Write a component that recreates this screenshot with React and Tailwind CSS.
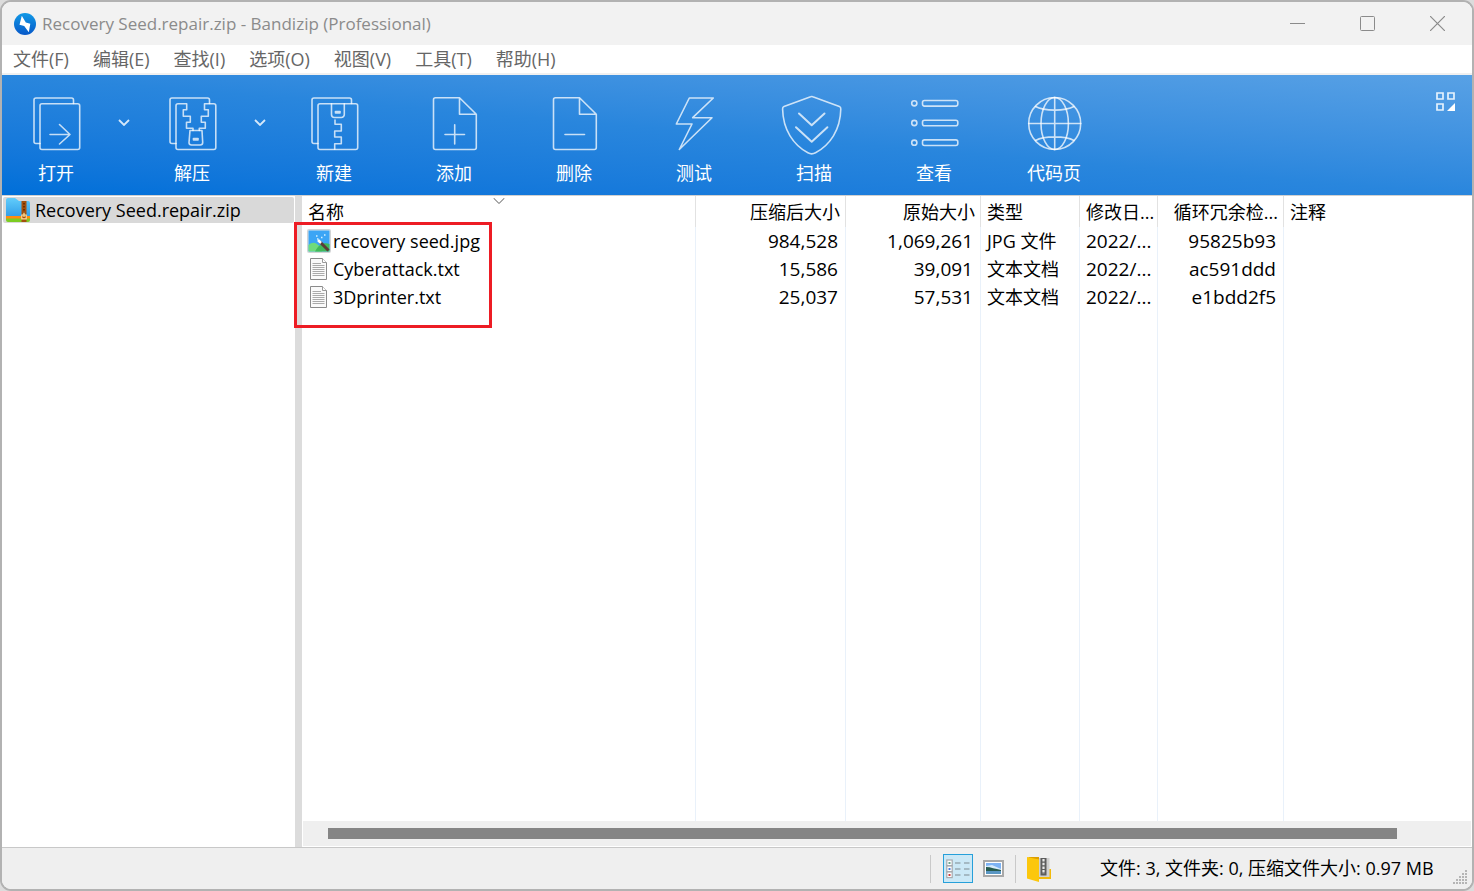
import React from 'react';

const stroke = {
    fill: 'none',
    stroke: '#fff',
    strokeOpacity: 0.75,
    strokeWidth: 1.6,
    strokeLinejoin: 'round',
    strokeLinecap: 'round',
};

const ToolIcon = ({ children }) => (
    <svg width="64" height="64" viewBox="0 0 64 64" className="overflow-visible" aria-hidden="true" {...stroke}>
        {children}
    </svg>
);

const BACK_SHEET = 'M16 51.5H12a2 2 0 0 1-2-2V8a2 2 0 0 1 2-2H47.5a2 2 0 0 1 2 2V11.5';
const FILE_SHEET = 'M37.5 5.8H13.5a2 2 0 0 0-2 2V55.5a2 2 0 0 0 2 2H52.3a2 2 0 0 0 2-2V22.3zV22.3H54.3';

const icons = {
    open: (
        <ToolIcon>
            <path d={BACK_SHEET} />
            <rect x="16" y="11.7" width="39.7" height="45.8" rx="2" />
            <path d="M26 42.5H46M35.5 32.5L46 42.5L35.5 52" />
        </ToolIcon>
    ),
    extract: (
        <ToolIcon>
            <path d={BACK_SHEET} />
            <path d="M33 38.5V36.3H26.5V30.3H30.3V24.3H23.3V17.7H26.7V11.7H18a2 2 0 0 0-2 2V55.5a2 2 0 0 0 2 2H53.8a2 2 0 0 0 2-2V13.7a2 2 0 0 0-2-2H44.5V17.7H48.3V24.3H41.3V30.3H45.3V36.3H39.3V38.5" />
            <path d="M30 38.5H42L42.7 50.5a2.5 2.5 0 0 1-2.5 2.5H31.5a2.5 2.5 0 0 1-2.5-2.5z" />
            <rect x="33.5" y="46.5" width="4.5" height="1.5" />
        </ToolIcon>
    ),
    create: (
        <ToolIcon>
            <path d={BACK_SHEET} />
            <rect x="16" y="11.7" width="39.7" height="45.8" rx="2" />
            <path d="M29.5 11.7V22.5a3 3 0 0 0 3 3H39.3a3 3 0 0 0 3-3V11.7" />
            <rect x="33.5" y="19.5" width="4.5" height="1.5" />
            <path d="M33 28V32.3H39.3V39H32.7V45H39.3V51.7H32.7V57.3" />
        </ToolIcon>
    ),
    add: (
        <ToolIcon>
            <path d={FILE_SHEET} />
            <path d="M23 42.5H42.5M32.7 32.7V52" />
        </ToolIcon>
    ),
    remove: (
        <ToolIcon>
            <path d={FILE_SHEET} />
            <path d="M23 42.5H42.5" />
        </ToolIcon>
    ),
    test: (
        <ToolIcon>
            <path d="M27.3 6H51.3L30.7 25.7H50L17.3 57.5L30 32H14.3z" />
        </ToolIcon>
    ),
    scan: (
        <ToolIcon>
            <path d="M28.6 4.7Q29.7 4.2 30.8 4.7L57.4 14.6Q58.9 15.2 58.8 17C58.4 38 48 53 33.5 60.8Q29.7 62.9 25.9 60.8C11.5 53 1 38 .6 17Q.5 15.2 2 14.6z" />
            <path d="M17 21.5L29.7 33.3L42.5 21.5M14 35.3L29.7 49.7L45.4 35.3" strokeWidth="2" />
        </ToolIcon>
    ),
    view: (
        <ToolIcon>
            {[11.3, 31, 50.7].map((y) => (
                <g key={y}>
                    <circle cx="12.3" cy={y} r="2.6" />
                    <rect x="20.5" y={y - 2.8} width="35.3" height="5.6" rx="2" />
                </g>
            ))}
        </ToolIcon>
    ),
    codepage: (
        <ToolIcon>
            <circle cx="32.7" cy="31.5" r="26" />
            <ellipse cx="32.7" cy="31.5" rx="13.7" ry="26" />
            <path d="M32.7 5.5V57.5M6.7 31.5H58.7M13.5 14.5C22 19.3 43.5 19.3 52 14.5M13.5 48.5C22 43.7 43.5 43.7 52 48.5" />
        </ToolIcon>
    ),
};

const menus = ['文件(F)', '编辑(E)', '查找(I)', '选项(O)', '视图(V)', '工具(T)', '帮助(H)'];

const tools = [
    { id: 'open', label: '打开', more: true },
    { id: 'extract', label: '解压', more: true },
    { id: 'create', label: '新建' },
    { id: 'add', label: '添加' },
    { id: 'remove', label: '删除' },
    { id: 'test', label: '测试' },
    { id: 'scan', label: '扫描' },
    { id: 'view', label: '查看' },
    { id: 'codepage', label: '代码页' },
];

const files = [
    { name: 'recovery seed.jpg', packed: '984,528', size: '1,069,261', type: 'JPG 文件', crc: '95825b93', image: true },
    { name: 'Cyberattack.txt', packed: '15,586', size: '39,091', type: '文本文档', crc: 'ac591ddd' },
    { name: '3Dprinter.txt', packed: '25,037', size: '57,531', type: '文本文档', crc: 'e1bdd2f5' },
];

const AppLogo = () => (
    <svg width="22" height="22" viewBox="0 0 22 22" aria-hidden="true">
        <defs>
            <linearGradient id="logo" x1="0" y1="0" x2="0" y2="1">
                <stop offset="0" stopColor="#1199e6" />
                <stop offset="1" stopColor="#0758c8" />
            </linearGradient>
        </defs>
        <circle cx="11" cy="11" r="11" fill="url(#logo)" />
        <path d="M7.8 2.8L5.5 11.8L10.2 13L14.800 19.300L16.300 10.700L11.800 9.500z" fill="#fff" />
    </svg>
);

const ZipFolderIcon = () => (
    <svg width="24" height="24" viewBox="0 0 24 24" className="shrink-0" aria-hidden="true">
        <defs>
            <linearGradient id="folder" x1="0" y1="0" x2="0" y2="1">
                <stop offset="0" stopColor="#62cdfb" />
                <stop offset="1" stopColor="#329fe9" />
            </linearGradient>
        </defs>
        <path d="M0 18V2a2 2 0 0 1 2-2H9l4 3H22a2 2 0 0 1 2 2V18z" fill="url(#folder)" />
        <path d="M0 18H24V21H0z" fill="#ff8b0f" />
        <path d="M0 20.5H24V22a2 2 0 0 1-2 2H2a2 2 0 0 1-2-2z" fill="#7ccc22" />
        <path d="M15.5 3H20.5V24H15.5z" fill="#a4500c" />
        <path d="M18 5V15" stroke="#5a2500" strokeWidth="1.5" strokeDasharray="1.5 1.5" />
        <path d="M15.8 17H20.2V20.800H15.800zM18 14.5V19" fill="none" stroke="#ffe2a0" strokeWidth="1.2" />
    </svg>
);

const ImageFileIcon = () => (
    <svg width="24" height="24" viewBox="0 0 24 24" className="shrink-0" aria-hidden="true">
        <rect x=".5" y=".5" width="23" height="23" rx="1" fill="#dfe3e6" stroke="#d2d4d6" />
        <rect x="1.5" y="1.5" width="21" height="21" fill="#3ba5f5" />
        <path d="M1.5 16C6 12 10 14 13 18L15 22.5H1.5z" fill="#6fdb7c" />
        <path d="M8 22.5C12 15 17 13 22.5 15V22.5z" fill="#41b95a" />
        <path d="M13 13L21.5 21.5" stroke="#5c3b35" strokeWidth="3" />
        <path d="M11 11L14 14" stroke="#fff" strokeWidth="2.5" />
        <path d="M9 7h1.500M14 8.500h1.500M17 6h1.500M10 10h1.500" stroke="#d8f1ff" strokeWidth="1.5" />
    </svg>
);

const TextFileIcon = () => (
    <svg width="24" height="24" viewBox="0 0 24 24" className="shrink-0" aria-hidden="true">
        <path d="M3.500 1.500H15.500L19.500 5.500V22.500H3.500z" fill="#fafafa" stroke="#8a8a8a" />
        <path d="M15.500 1.500V5.500H19.500" fill="#fff" stroke="#9a9a9a" />
        <path d="M5.500 6.500H14M5.500 8.500H17.500M5.500 10.500H17.500M5.500 12.500H17.500M5.500 14.500H17.500M5.500 16.500H17.500M5.500 18.500H17.500" stroke="#aaa" />
    </svg>
);

const DetailsIcon = () => (
    <svg width="24" height="20" viewBox="0 0 24 20" fill="none" aria-hidden="true">
        {[['#6aa58d', 0], ['#4a7fe0', 6], ['#cf3a3a', 12]].map(([color, y]) => (
            <g key={y}>
                <rect x=".8" y={y + 1} width="5.400" height="5.600" fill="#fff" stroke="#a6aaae" strokeWidth="1.200" />
                <rect x="2.500" y={y + 3} width="2" height="2" fill={color} />
                <path d={`M9 ${y + 4}H14.500M18 ${y + 4}H23.500`} stroke="#7f8a90" strokeWidth="1.200" />
            </g>
        ))}
    </svg>
);

const PreviewIcon = () => (
    <svg width="21" height="17" viewBox="0 0 21 17" aria-hidden="true">
        <rect x="1" y="1" width="19" height="15" fill="#fff" stroke="#a8a8a8" strokeWidth="2" />
        <rect x="3" y="3" width="15" height="11" fill="#7db3f5" />
        <path d="M3 6L9 5L18 9V11H3z" fill="#d6ebfb" />
        <path d="M3 7C8 7 12 9 18 10V11H3z" fill="#275b4e" />
        <path d="M3 11H18V14H3z" fill="#5a97c4" />
    </svg>
);

const FolderZipIcon = () => (
    <svg width="24" height="26" viewBox="0 0 24 26" aria-hidden="true">
        <path d="M12 2H22V13H24V23H12z" fill="#f2ba0b" />
        <path d="M12 2H22.500V21H12z" fill="#d0d0d0" />
        <path d="M13.500 2H19.500V19.500H13.500z" fill="#5c5c5c" />
        <path d="M16.500 3V18" stroke="#e8e8e8" strokeWidth="2.200" strokeDasharray="2.500 1.200" />
        <path d="M1 1H12V4L3 3z" fill="#dd9f00" />
        <path d="M0 1L12 3.500V26L0 22.500z" fill="#fcc70c" />
    </svg>
);

const TitleBar = () => (
    <header className="flex h-[43px] shrink-0 items-center bg-[#f2f2f2] pl-3 text-[#8b8b8b]">
        <AppLogo />
        <h1 className="ml-[6px] flex-1 text-[17px]">Recovery Seed.repair.zip - Bandizip (Professional)</h1>
        <button aria-label="Minimize" className="flex h-full w-[70px] items-center justify-center">
            <svg width="15" height="15" viewBox="0 0 15 15"><path d="M0 7.500H15" stroke="#8b8b8b" /></svg>
        </button>
        <button aria-label="Maximize" className="flex h-full w-[70px] items-center justify-center">
            <svg width="15" height="15" viewBox="0 0 15 15"><rect x=".5" y=".5" width="14" height="14" rx="1" fill="none" stroke="#8b8b8b" /></svg>
        </button>
        <button aria-label="Close" className="flex h-full w-[70px] items-center justify-center">
            <svg width="15" height="15" viewBox="0 0 15 15"><path d="M0 0L15 15M15 0L0 15" stroke="#8b8b8b" strokeWidth="1.200" /></svg>
        </button>
    </header>
);

const Toolbar = () => (
    <div className="flex h-[120px] shrink-0 bg-linear-to-tr from-[#006fd9] via-[#2986dd] to-[#58a1e5] text-white">
        {tools.map((tool) => (
            <React.Fragment key={tool.id}>
                <button className={`flex shrink-0 flex-col items-center pt-[17px] ${tool.more ? 'w-[108px]' : 'w-[120px]'}`}>
                    {icons[tool.id]}
                    <span className="mt-1 text-[18px] leading-[26px]">{tool.label}</span>
                </button>
                {tool.more && (
                    <button aria-label={`${tool.label} ▾`} className="flex w-7 shrink-0 justify-center pt-11">
                        <svg width="12" height="7" viewBox="0 0 12 7"><path d="M1 1L6 6L11 1" fill="none" stroke="#d5e8fa" strokeWidth="1.800" /></svg>
                    </button>
                )}
            </React.Fragment>
        ))}
        <button aria-label="Layout" className="mt-4 mr-[17px] ml-auto h-5">
            <svg width="19" height="19" viewBox="0 0 19 19" fill="none" stroke="#e6f2fd" strokeWidth="1.700">
                <path d="M1 1H7V7H1zM12 1H18V7H12zM1 12H7V18H1z" />
                <path d="M19 11V19H11z" fill="#fff" stroke="none" />
            </svg>
        </button>
    </div>
);

const cell = 'overflow-hidden whitespace-nowrap border-r border-[#e9f1fa]';
const head = 'overflow-hidden whitespace-nowrap border-r border-[#e2e2e2] pt-[2px] font-normal';

const FileTable = () => (
    <table className="h-full w-full table-fixed border-separate border-spacing-0 text-[19px] leading-[27px]">
        <colgroup>
            <col className="w-[394px]" />
            <col className="w-[150px]" />
            <col className="w-[135px]" />
            <col className="w-[99px]" />
            <col className="w-[78px]" />
            <col className="w-[126px]" />
            <col />
        </colgroup>
        <thead>
            <tr className="h-[31px] text-[18px]">
                <th className={`${head} relative px-[6px] text-left`}>
                    名称
                    <svg width="11" height="6" viewBox="0 0 11 6" className="absolute top-[2px] left-1/2 -translate-x-1/2"><path d="M0 0L5.500 5.500L11 0" fill="none" stroke="#555" /></svg>
                </th>
                <th className={`${head} px-[5px] text-right`}>压缩后大小</th>
                <th className={`${head} px-[5px] text-right`}>原始大小</th>
                <th className={`${head} px-[6px] text-left`}>类型</th>
                <th className={`${head} px-[6px] text-left`}>修改日...</th>
                <th className={`${head} px-[5px] text-right`}>循环冗余检...</th>
                <th className="px-[6px] pt-[2px] text-left font-normal">注释</th>
            </tr>
        </thead>
        <tbody>
            {files.map((file) => (
                <tr key={file.name} className="h-7">
                    <td className={`${cell} px-[5px] text-[18px]`}>
                        <span className="flex items-center gap-[2px]">
                            {file.image ? <ImageFileIcon /> : <TextFileIcon />}
                            {file.name}
                        </span>
                    </td>
                    <td className={`${cell} px-[7px] text-right`}>{file.packed}</td>
                    <td className={`${cell} px-[7px] text-right`}>{file.size}</td>
                    <td className={`${cell} px-[6px] text-[18px]`}>{file.type}</td>
                    <td className={`${cell} px-[6px]`}>2022/...</td>
                    <td className={`${cell} px-[7px] text-right`}>{file.crc}</td>
                    <td />
                </tr>
            ))}
            <tr>
                <td className={cell} />
                <td className={cell} />
                <td className={cell} />
                <td className={cell} />
                <td className={cell} />
                <td className={cell} />
                <td />
            </tr>
        </tbody>
    </table>
);

const StatusBar = () => (
    <footer className="flex h-[42px] shrink-0 items-center justify-end border-t border-[#c8c8c8] bg-[#efefef]">
        <span className="h-7 w-px bg-[#c9c9c9]" />
        <button aria-label="Details" className="ml-3 flex h-[29px] w-[30px] items-center justify-center border border-[#26a0da] bg-[#cbe8f6]">
            <DetailsIcon />
        </button>
        <button aria-label="Preview" className="ml-[10px]"><PreviewIcon /></button>
        <span className="ml-[11px] h-7 w-px bg-[#c9c9c9]" />
        <button aria-label="Folder" className="ml-[11px]"><FolderZipIcon /></button>
        <span className="ml-[49px] min-w-[336px] text-[18px]">文件: 3, 文件夹: 0, 压缩文件大小: 0.97 MB</span>
        <svg width="16" height="16" viewBox="0 0 16 16" className="mr-1 mb-1 ml-4 self-end" fill="#b5b5b5" aria-hidden="true">
            {[0, 1, 2, 3, 4].map((row) =>
                Array.from({ length: row + 1 }, (_, i) => (
                    <rect key={`${row}-${i}`} x={13 - i * 3} y={1 + row * 3} width="2" height="2" />
                ))
            )}
        </svg>
    </footer>
);

const App = () => {
    return (
        <div className="h-screen bg-[#dcdcdc] font-['Open_Sans','Noto_Sans_CJK_SC',sans-serif] text-black">
            <div className="flex h-full flex-col overflow-hidden rounded-[11px] border-2 border-[#b2b2b2] bg-white">
                <TitleBar />
                <nav className="flex h-[30px] shrink-0 items-center border-b-2 border-[#f0f0f0] bg-white text-[18px] text-[#666]">
                    {menus.map((menu) => (
                        <button key={menu} className="pr-[13px] pl-[11px] leading-7">{menu}</button>
                    ))}
                </nav>
                <Toolbar />
                <main className="flex min-h-0 flex-1 border-t border-[#d0d0d0]">
                    <aside className="w-[293px] shrink-0 p-px">
                        <button className="flex h-[26px] w-full items-center gap-[5px] rounded-[2px] bg-[#d9d9d9] pl-[3px] text-[18px]">
                            <ZipFolderIcon />
                            Recovery Seed.repair.zip
                        </button>
                    </aside>
                    <div className="w-[7px] shrink-0 bg-[#dcdcdc]" />
                    <section className="relative flex min-w-0 flex-1 flex-col">
                        <div className="min-h-0 flex-1">
                            <FileTable />
                        </div>
                        <div className="mx-px mb-px flex h-[25px] shrink-0 items-center bg-[#efefef]">
                            <div className="mr-[74px] ml-[25px] h-[11px] flex-1 bg-[#858585]" />
                        </div>
                        <div className="pointer-events-none absolute top-[26px] -left-2 h-[106px] w-[198px] border-3 border-[#ed1c24]" />
                    </section>
                </main>
                <StatusBar />
            </div>
        </div>
    );
};

export default App;
